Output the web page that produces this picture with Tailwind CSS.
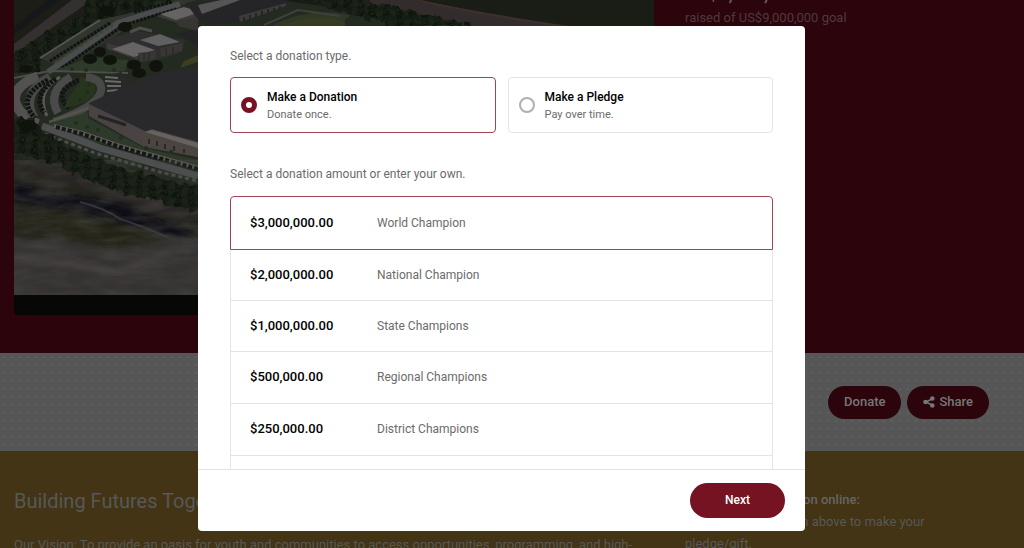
<!DOCTYPE html>
<html lang="en">
<head>
  <meta charset="UTF-8" />
  <meta name="viewport" content="width=device-width, initial-scale=1.0" />
  <title>Building Futures Together - Donate</title>
  <script src="https://cdn.jsdelivr.net/npm/@tailwindcss/browser@4"></script>
</head>
<body class="h-screen overflow-hidden bg-[#423414] font-['Roboto',sans-serif]">

  <!-- Campaign page, dimmed behind the dialog -->
  <main>
    <!-- Hero -->
    <section class="grid grid-cols-[2fr_1fr] gap-[31px] bg-[#2b040c] pr-[19px] pb-[38px] pl-3.5">
      <div class="h-[315px] overflow-hidden rounded-b bg-[#070806]">
        <svg class="block w-full h-[295px]" viewBox="14 0 640 295" preserveAspectRatio="xMinYMin slice" aria-hidden="true">
          <defs>
            <pattern id="trees" width="13" height="9" patternUnits="userSpaceOnUse">
              <rect width="13" height="9" fill="#171b12" />
              <circle cx="3" cy="3" r="3" fill="#1c2216" />
              <circle cx="9" cy="6" r="3" fill="#10140c" />
              <circle cx="9" cy="5" r="1" fill="#20261a" />
            </pattern>
            <filter id="soft"><feGaussianBlur stdDeviation="3" /></filter>
            <filter id="rough">
              <feTurbulence type="fractalNoise" baseFrequency="0.12" numOctaves="2" seed="7" />
              <feDisplacementMap in="SourceGraphic" scale="12" xChannelSelector="R" yChannelSelector="G" />
            </filter>
            <filter id="ground" x="0" y="0" width="100%" height="100%">
              <feTurbulence type="fractalNoise" baseFrequency="0.03 0.12" numOctaves="3" seed="4" />
              <feColorMatrix values="0 0 0 0 0.07  0 0 0 0 0.07  0 0 0 0 0.06  1 0 0 0 -0.35" />
            </filter>
          </defs>
          <rect x="14" width="640" height="295" fill="#232b20" />
          <!-- fields and road at the top -->
          <path d="M14 0H110L60 42 14 62Z" fill="#1b1d16" />
          <path d="M14 44L72 0H92L14 54Z" fill="#343030" />
          <path d="M14 27L48 0H60L14 34Z" fill="#16171b" />
          <path d="M280 0H654V26H460Z" fill="#191d15" />
          <path d="M360 0H420Q480 13 570 26H450Z" fill="#322d2c" />
          <path d="M420 1Q480 14 560 26" stroke="#3c302b" stroke-width="2" fill="none" />
          <g filter="url(#rough)">
            <path d="M285 -4H350L475 26H395Z" fill="url(#trees)" />
            <path d="M86 -6H180L130 16 98 20 46 56 38 70 10 74V55L50 32 84 14Z" fill="url(#trees)" />
          </g>
          <!-- diagonal car park -->
          <path d="M40 58L98 20 126 14 176 0H196L140 20 64 68Z" fill="#30362e" />
          <path d="M40 58L100 20" stroke="#55544f" stroke-width="2" />
          <path d="M48 72L118 23 180 4" stroke="#4b4c4d" stroke-width="6" fill="none" />
          <path d="M50 61L110 23M62 68L124 25 176 9M134 12L172 2" stroke="#111311" stroke-width="3" stroke-dasharray="3 1" fill="none" />
          <path d="M55 63L113 25" stroke="#3b4732" stroke-width="2" stroke-dasharray="4 2" />
          <!-- upper buildings -->
          <path d="M105 39L137 31 185 40 182 52 152 62 106 48Z" fill="#2f2e2f" />
          <path d="M107 49L138 60V52L107 43Z" fill="#3b3937" />
          <path d="M112 49L133 42 155 50 134 57Z" fill="#656363" />
          <path d="M140 40L160 34 180 42 158 46Z" fill="#606060" />
          <path d="M156 16L190 7H198V20L178 23Z" fill="#3c3b3a" />
          <path d="M160 14L184 7 200 12 176 20Z" fill="#656363" />
          <path d="M177 21L198 17V31L178 26Z" fill="#373534" />
          <path d="M174 34L198 30V46L186 39Z" fill="#232326" />
          <path d="M138 53L156 51V59L140 62ZM160 48L182 43V51L161 57Z" fill="#393634" />
          <path d="M144 53V60M149 52V60M166 48V55M173 47V54" stroke="#252526" />
          <path d="M186 3L220 0H287L288 4 236 22 208 25 196 17Z" fill="#252528" />
          <path d="M198 5L221 0H240L202 14Z" fill="#555555" />
          <path d="M239 16L286 3V6L240 22Z" fill="#40393a" />
          <path d="M244 17V21M250 15V20M256 13V18M262 11V17M268 9V14M274 8V12M280 6V10" stroke="#262526" stroke-width="2" />
          <path d="M270 26Q310 6 350 15L340 26Z" fill="#2f3824" />
          <path d="M282 26Q315 12 345 22V26Z" fill="#373b22" />
          <path d="M264 25L298 10 340 16" stroke="#403f3c" stroke-width="2" fill="none" />
          <path d="M130 32L140 28 152 31" stroke="#4d4d4b" stroke-width="3" fill="none" />
          <!-- lawn, paths and crescent parking -->
          <path d="M54 71L90 57 128 60 125 71Z" fill="#2e3a2a" />
          <path d="M14 78L50 71 128 73" stroke="#4e4d49" stroke-width="2" fill="none" />
          <path d="M38 76Q10 88 16 104 21 117 38 124" stroke="#535250" stroke-width="10" fill="none" />
          <path d="M50 77Q20 93 34 118" stroke="#494a48" stroke-width="9" fill="none" />
          <path d="M60 77Q35 92 47 116" stroke="#5a5957" stroke-width="3" fill="none" />
          <path d="M71 77Q46 92 58 113" stroke="#494a49" stroke-width="8" fill="none" />
          <path d="M48 80Q15 97 35 118M56 79Q32 94 44 113M79 80Q51 92 69 108" stroke="#131514" stroke-width="5" stroke-dasharray="3 1" fill="none" />
          <path d="M80 77Q97 80 95 91 93 103 64 108 68 96 79 84Z" fill="#27351f" />
          <path d="M86 77Q103 79 101 91 98 106 54 122" stroke="#484947" stroke-width="8" fill="none" />
          <path d="M105 76L121 72 130 81 110 93Z" fill="#262927" />
          <path d="M105 77L118 78M105 81L121 82M107 86L121 86M107 91L118 90" stroke="#6a6968" stroke-width="2" />
          <!-- main hall -->
          <path d="M89 103L150 75 181 68H198V143L150 132 92 114Z" fill="#29282a" />
          <path d="M180 68L198 62V55L184 61Z" fill="#3b3e20" />
          <path d="M89 104L147 132 198 143V157L144 147 89 116Z" fill="#494443" />
          <path d="M98 116L126 125" stroke="#232324" stroke-width="3" />
          <path d="M143 132L152 129 198 142V157L144 145Z" fill="#4b4542" />
          <path d="M145 132L152 130 198 143V148Z" fill="#656260" />
          <path d="M149 139V144M157 141V146M165 144V149M174 146V151M184 149V153" stroke="#292727" stroke-width="2" />
          <!-- road in front of the hall -->
          <path d="M43 125L88 112 88 118 144 148 198 160V168L55 132Z" fill="#2d3a2a" />
          <path d="M42 126L100 148 198 176" stroke="#4d4e50" stroke-width="7" fill="none" />
          <path d="M54 126L82 133 120 146 198 168" stroke="#5c5b5a" stroke-width="4" fill="none" />
          <path d="M56 127L82 134 120 147 198 169" stroke="#151615" stroke-width="4" stroke-dasharray="4 2" fill="none" />
          <path d="M45 134L95 153 160 172 198 181" stroke="#4d4c4b" stroke-width="3" stroke-dasharray="4 3" fill="none" />
          <path d="M49 122L88 108" stroke="#57544f" stroke-width="2" />
          <!-- tree belt and open ground -->
          <path d="M14 155L84 176 150 196 198 206V295H14Z" fill="#25241f" />
          <path d="M14 160Q60 162 98 178 150 195 198 204V218L130 205 60 175Z" fill="#2c2725" filter="url(#soft)" />
          <path d="M14 183Q60 195 90 199 132 202 140 215 180 225 198 238V248Q130 230 70 210L14 199Z" fill="#101116" filter="url(#soft)" />
          <path d="M14 216L60 212 140 228 198 244V260L14 236Z" fill="#202018" filter="url(#soft)" />
          <path d="M0 237Q70 238 110 248L210 232V310H0Z" fill="#363130" filter="url(#soft)" />
          <path d="M14 257Q70 262 118 273L168 252" stroke="#484341" stroke-width="5" fill="none" filter="url(#soft)" />
          <path d="M80 202Q105 208 120 219 150 228 198 252" stroke="#303038" stroke-width="2" fill="none" />
          <rect x="14" y="160" width="190" height="135" filter="url(#ground)" />
          <path d="M4 117L34 120 42 132 70 148 110 164 150 175 210 190V215L150 199 120 192 84 178 50 162 4 150Z" fill="url(#trees)" filter="url(#rough)" />
          <!-- single trees -->
          <g fill="#0f130c">
            <ellipse cx="90" cy="59" rx="7" ry="5" /><ellipse cx="110" cy="60" rx="7" ry="5" />
            <ellipse cx="100" cy="52" rx="6" ry="5" /><ellipse cx="125" cy="27" rx="7" ry="5" />
            <ellipse cx="134" cy="65" rx="7" ry="5" /><ellipse cx="139" cy="73" rx="7" ry="5" />
            <ellipse cx="156" cy="66" rx="7" ry="6" /><ellipse cx="28" cy="126" rx="9" ry="6" />
            <ellipse cx="107" cy="11" rx="8" ry="5" /><ellipse cx="26" cy="69" rx="7" ry="4" />
          </g>
          <g fill="#222d1b">
            <circle cx="72" cy="69" r="2" /><circle cx="86" cy="70" r="2" /><circle cx="114" cy="70" r="2" />
            <circle cx="89" cy="84" r="2" /><circle cx="87" cy="92" r="2" /><circle cx="80" cy="100" r="2" />
            <circle cx="76" cy="123" r="2" /><circle cx="87" cy="127" r="2" /><circle cx="98" cy="130" r="2" />
            <circle cx="121" cy="138" r="2" /><circle cx="146" cy="148" r="2" /><circle cx="171" cy="152" r="2" />
          </g>
        </svg>
      </div>
      <div class="relative text-[13px] text-[#503a3e]">
        <p class="absolute -top-4 left-0 text-lg leading-5 font-bold text-[#665a5c]">US$4,217,500.00</p>
        <p class="pt-2.5 leading-4">raised of US$9,000,000 goal</p>
      </div>
    </section>

    <!-- Action bar -->
    <section class="flex h-[98px] items-center justify-end gap-1.5 bg-[#565656] bg-[radial-gradient(#5f5f5f_1px,transparent_1px)] bg-size-[8px_8px] pr-[35px]">
      <button class="h-[33px] rounded-full bg-[#2b040c] px-4 text-[13px] font-medium text-[#777]">Donate</button>
      <button class="flex h-[33px] items-center gap-1 rounded-full bg-[#2b040c] px-4 text-[13px] font-medium text-[#777]">
        <svg class="size-3" viewBox="0 0 12 12" fill="currentColor" aria-hidden="true">
          <path d="M9 3L3 6l6 3" fill="none" stroke="currentColor" stroke-width="1.5" />
          <circle cx="9.3" cy="2.5" r="2.3" /><circle cx="2.5" cy="6" r="2.3" /><circle cx="9.3" cy="9.5" r="2.3" />
        </svg>
        Share
      </button>
    </section>

    <!-- Campaign story -->
    <section class="grid grid-cols-[2fr_1fr] gap-[31px] bg-[#423414] pt-9 pr-[19px] pl-3.5 text-[#575859]">
      <div>
        <h1 class="text-xl leading-7">Building Futures Together</h1>
        <p class="mt-5 text-[13px] leading-5 whitespace-nowrap">Our Vision: To provide an oasis for youth and communities to access opportunities, programming, and high-</p>
      </div>
      <div class="pt-0.5 text-[13px] leading-[22px]">
        <p class="font-medium text-[#666]">To make your donation online:</p>
        <p>Hit the Donate button above to make your<br />pledge/gift.</p>
      </div>
    </section>
  </main>

  <!-- Donation dialog -->
  <div class="fixed inset-0 flex items-center justify-center pt-2 pr-[21px]">
    <form role="dialog" aria-label="Donate" class="flex h-[505px] w-[607px] flex-col overflow-hidden rounded bg-white text-xs text-[#6b6b6b]">
      <div class="min-h-0 flex-1 overflow-hidden px-8 pt-[22px]">
        <fieldset>
          <legend class="leading-4">Select a donation type.</legend>
          <div class="mt-[13px] grid grid-cols-2 gap-3">
            <label class="flex h-14 items-center gap-2.5 rounded border border-[#a04455] px-2.5">
              <input type="radio" name="type" checked class="size-4 appearance-none rounded-full border-[5px] border-[#751323] bg-white" />
              <span class="pt-0.5 leading-[17px]"><b class="block font-medium text-black">Make a Donation</b><span class="text-[11px]">Donate once.</span></span>
            </label>
            <label class="flex h-14 items-center gap-2.5 rounded border border-[#e4e4e4] px-2.5">
              <input type="radio" name="type" class="size-4 appearance-none rounded-full border-2 border-[#b0b0b0] bg-white" />
              <span class="pt-0.5 leading-[17px]"><b class="block font-medium text-black">Make a Pledge</b><span class="text-[11px]">Pay over time.</span></span>
            </label>
          </div>
        </fieldset>

        <p class="mt-[33px] leading-4">Select a donation amount or enter your own.</p>
        <ul class="mt-3.5">
          <li><button type="button" class="flex h-[54px] w-full items-center rounded-t border border-[#a04455] px-[19px] text-left"><b class="w-[127px] text-[13px] font-medium text-black">$3,000,000.00</b>World Champion</button></li>
          <li><button type="button" class="flex h-[51px] w-full items-center border-x border-b border-[#e4e4e4] px-[19px] text-left"><b class="w-[127px] text-[13px] font-medium text-black">$2,000,000.00</b>National Champion</button></li>
          <li><button type="button" class="flex h-[51px] w-full items-center border-x border-b border-[#e4e4e4] px-[19px] text-left"><b class="w-[127px] text-[13px] font-medium text-black">$1,000,000.00</b>State Champions</button></li>
          <li><button type="button" class="flex h-[52px] w-full items-center border-x border-b border-[#e4e4e4] px-[19px] text-left"><b class="w-[127px] text-[13px] font-medium text-black">$500,000.00</b>Regional Champions</button></li>
          <li><button type="button" class="flex h-[52px] w-full items-center border-x border-b border-[#e4e4e4] px-[19px] text-left"><b class="w-[127px] text-[13px] font-medium text-black">$250,000.00</b>District Champions</button></li>
          <li class="h-[52px] border-x border-b border-[#e4e4e4]"></li>
        </ul>
      </div>
      <div class="flex justify-end border-t border-[#e4e4e4] px-5 py-[13px]">
        <button type="submit" class="h-[35px] w-[95px] rounded-full bg-[#751323] font-medium text-white">Next</button>
      </div>
    </form>
  </div>
</body>
</html>
